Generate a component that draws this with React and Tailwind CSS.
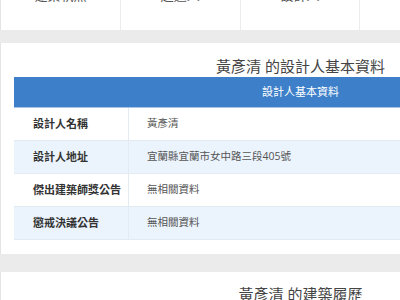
export default function App() {
  const rows = [
    ["設計人名稱", "黃彥清", false],
    ["設計人地址", "宜蘭縣宜蘭市女中路三段405號", true],
    ["傑出建築師獎公告", "無相關資料", false],
    ["懲戒決議公告", "無相關資料", true],
  ];
  const tabs = ["建築執照", "起造人", "設計人", "監造人", "承造人"];
  return (
    <div
      className="w-[400px] h-[300px] overflow-hidden bg-[#ebebeb]"
      style={{ fontFamily: '"Open Sans", "Noto Sans CJK TC", sans-serif' }}
    >
      <div className="w-[600px]">
        {/* top tabs */}
        <div className="-mt-[39px] h-[69px] bg-white flex border-l border-[#e4e4e4]">
          {tabs.map((t) => (
            <div
              key={t}
              className="w-[120px] h-full flex items-center justify-center border-r border-[#ececec] text-[13px] leading-[13px] text-[#555]"
            >
              {t}
            </div>
          ))}
        </div>

        {/* basic info card */}
        <div className="mt-[13px] bg-white border-l border-[#e4e4e4] px-[13px] pt-[13px] pb-[14px]">
          <div className="h-[21px] flex items-center justify-center text-[15px] text-[#444]">
            黃彥清 的設計人基本資料
          </div>
          <div className="h-[31px] bg-[#3d7fc9] border-b border-[#a6c6e6] flex items-center justify-center text-[11px] text-white">
            設計人基本資料
          </div>
          {rows.map(([label, value, alt]) => (
            <div
              key={label}
              className={`flex h-[33px] border-b border-[#e2eaf2] ${alt ? "bg-[#ebf3fc]" : "bg-white"}`}
            >
              <div className="w-[115px] shrink-0 border-r border-[#e3eaf1] flex items-center pl-[19px] text-[11px] font-semibold text-[#333] whitespace-nowrap">
                {label}
              </div>
              <div className="flex-1 flex items-center pl-[18px] text-[10.5px] text-[#555] whitespace-nowrap">
                {value}
              </div>
            </div>
          ))}
        </div>

        {/* history card */}
        <div className="mt-[18px] bg-white border-l border-[#e4e4e4] px-[13px] pt-[12px] h-[100px]">
          <div className="h-[21px] flex items-center justify-center text-[15px] text-[#444]">
            黃彥清 的建築履歷
          </div>
        </div>
      </div>
    </div>
  );
}
